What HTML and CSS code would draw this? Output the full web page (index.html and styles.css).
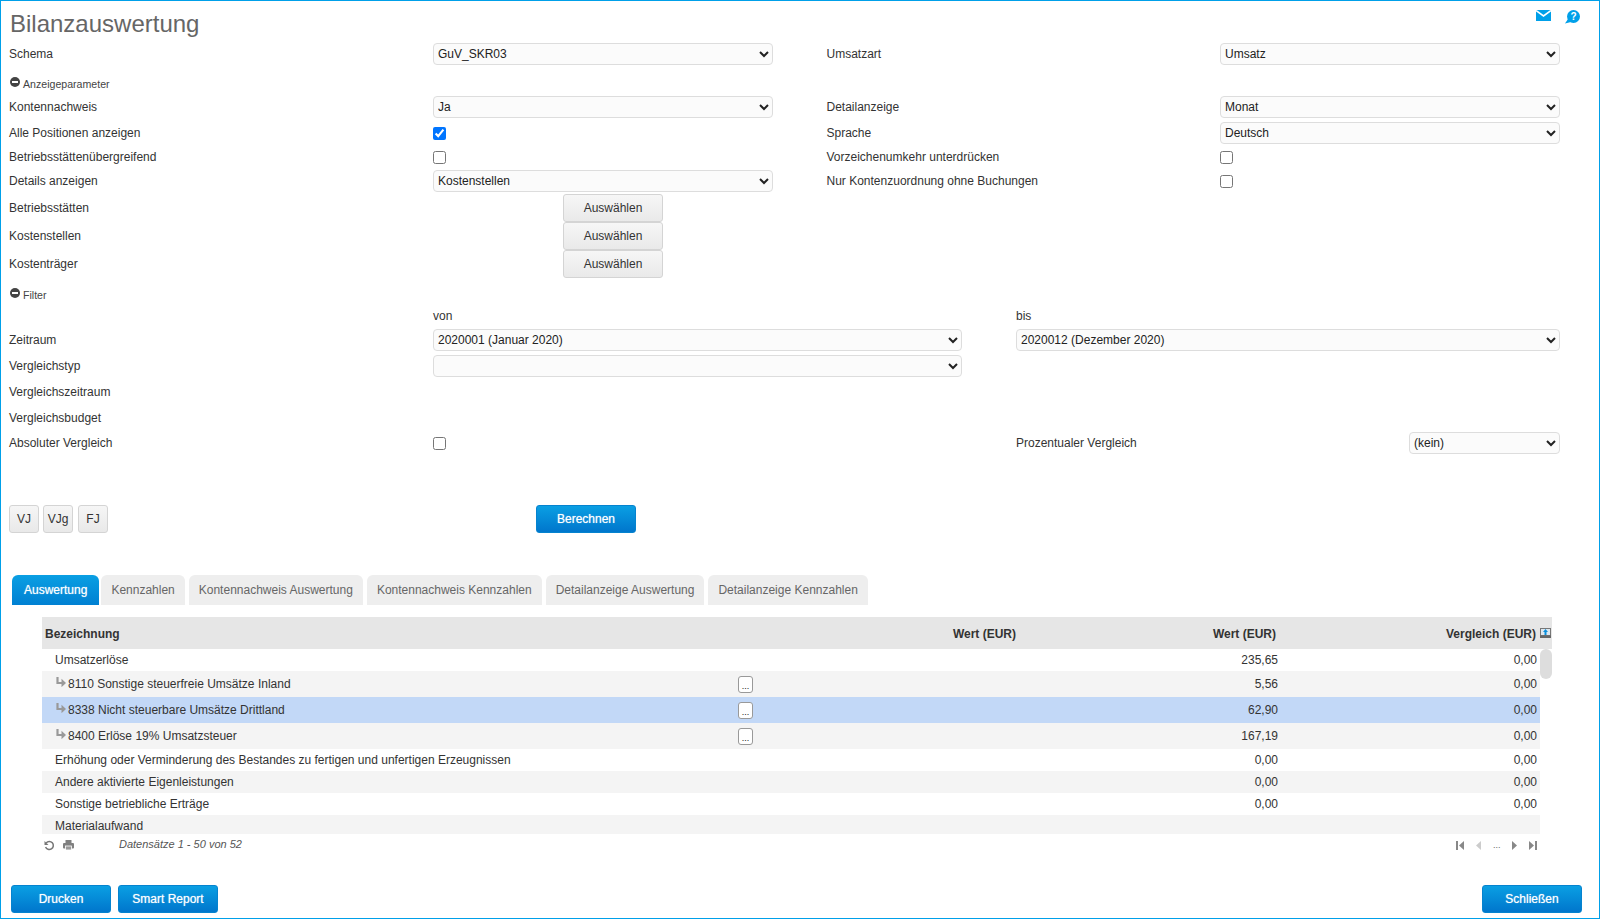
FILE: index.html
```html
<!DOCTYPE html>
<html lang="de">
<head>
<meta charset="UTF-8">
<meta name="viewport" content="width=device-width, initial-scale=1.0">
<title>Bilanzauswertung</title>
<link rel="stylesheet" href="styles.css">
</head>
<body>

<svg class="sprites" width="0" height="0">
  <symbol id="minus" viewBox="0 0 10 10"><circle cx="5" cy="5" r="5" fill="#444"/><rect x="2" y="4" width="6" height="2" fill="#fff"/></symbol>
  <symbol id="sub" viewBox="0 0 10 10"><path d="M1.5 0V6H6" fill="none" stroke="#999" stroke-width="2.2"/><path d="M5.5 1.8L10 6L5.5 10.2Z" fill="#999"/></symbol>
</svg>

<div class="page">

  <div class="title-bar">
    <h1>Bilanzauswertung</h1>
    <div class="top-icons">
      <svg width="15" height="11" viewBox="0 0 15 11"><rect width="15" height="11" fill="#00a0e9"/><path d="M0 0.5L7.5 6L15 0.5" fill="none" stroke="#fff" stroke-width="1.6"/></svg>
      <svg width="15" height="14" viewBox="0 0 15 14"><circle cx="8.5" cy="6.5" r="6.5" fill="#00a0e9"/><path d="M3 9L0 13.5L6 12Z" fill="#00a0e9"/><text x="8.5" y="10" class="help-mark">?</text></svg>
    </div>
  </div>

  <div class="form-row">
    <label>Schema</label>
    <select><option>GuV_SKR03</option></select>
    <label class="second">Umsatzart</label>
    <select><option>Umsatz</option></select>
  </div>

  <div class="section-head section-first"><svg width="10" height="10"><use href="#minus"/></svg>Anzeigeparameter</div>

  <div class="form-row flush">
    <label>Kontennachweis</label>
    <select><option>Ja</option></select>
    <label class="second">Detailanzeige</label>
    <select><option>Monat</option></select>
  </div>
  <div class="form-row">
    <label>Alle Positionen anzeigen</label>
    <div><input type="checkbox" checked></div>
    <label class="second">Sprache</label>
    <select><option>Deutsch</option></select>
  </div>
  <div class="form-row tight">
    <label>Betriebsstättenübergreifend</label>
    <div><input type="checkbox"></div>
    <label class="second">Vorzeichenumkehr unterdrücken</label>
    <div><input type="checkbox"></div>
  </div>
  <div class="form-row tight">
    <label>Details anzeigen</label>
    <select><option>Kostenstellen</option></select>
    <label class="second">Nur Kontenzuordnung ohne Buchungen</label>
    <div><input type="checkbox"></div>
  </div>
  <div class="form-row tight pick">
    <label>Betriebsstätten</label>
    <div><button class="btn btn-pick">Auswählen</button></div>
  </div>
  <div class="form-row flush pick">
    <label>Kostenstellen</label>
    <div><button class="btn btn-pick">Auswählen</button></div>
  </div>
  <div class="form-row flush pick">
    <label>Kostenträger</label>
    <div><button class="btn btn-pick">Auswählen</button></div>
  </div>

  <div class="section-head section-filter"><svg width="10" height="10"><use href="#minus"/></svg>Filter</div>

  <div class="form-row filter-row flush">
    <span></span>
    <label>von</label>
    <span></span>
    <label>bis</label>
  </div>
  <div class="form-row filter-row tight">
    <label>Zeitraum</label>
    <select><option>2020001 (Januar 2020)</option></select>
    <span></span>
    <select class="span2"><option>2020012 (Dezember 2020)</option></select>
  </div>
  <div class="form-row filter-row">
    <label>Vergleichstyp</label>
    <select><option></option></select>
  </div>
  <div class="form-row filter-row">
    <label>Vergleichszeitraum</label>
  </div>
  <div class="form-row filter-row">
    <label>Vergleichsbudget</label>
  </div>
  <div class="form-row filter-row near">
    <label>Absoluter Vergleich</label>
    <div><input type="checkbox"></div>
    <span></span>
    <label>Prozentualer Vergleich</label>
    <select><option>(kein)</option></select>
  </div>

  <div class="actions">
    <button class="btn btn-small">VJ</button>
    <button class="btn btn-small btn-vjg">VJg</button>
    <button class="btn btn-small">FJ</button>
    <button class="btn btn-blue btn-calc">Berechnen</button>
  </div>

  <div class="tabs">
    <div class="tab active">Auswertung</div>
    <div class="tab">Kennzahlen</div>
    <div class="tab">Kontennachweis Auswertung</div>
    <div class="tab">Kontennachweis Kennzahlen</div>
    <div class="tab">Detailanzeige Auswertung</div>
    <div class="tab">Detailanzeige Kennzahlen</div>
  </div>

  <div class="grid">
    <table class="grid-head">
      <colgroup><col class="c-name"><col class="c-btn"><col class="c-wert"><col class="c-val"><col class="c-val"><col class="c-tool"></colgroup>
      <tr>
        <th class="name">Bezeichnung</th>
        <th></th>
        <th>Wert (EUR)</th>
        <th class="wert2">Wert (EUR)</th>
        <th class="cmp">Vergleich (EUR)</th>
        <th class="tool"><svg width="11" height="10" viewBox="0 0 11 10"><rect x="0.5" y="0.5" width="10" height="7" fill="#dde6ee" stroke="#777"/><rect y="7.5" width="11" height="2.5" fill="#666"/><path d="M5.5 1L8 4H6.5V7H4.5V4H3Z" fill="#0a8fdc"/></svg></th>
      </tr>
    </table>
    <div class="grid-scroll">
      <table class="grid-body">
        <colgroup><col class="c-name"><col class="c-btn"><col class="c-wert"><col class="c-val"><col class="c-val"></colgroup>
        <tr>
          <td class="name">Umsatzerlöse</td><td></td><td></td><td class="num wert2">235,65</td><td class="num">0,00</td>
        </tr>
        <tr class="acct odd">
          <td class="name"><svg width="10" height="10"><use href="#sub"/></svg>8110 Sonstige steuerfreie Umsätze Inland</td><td><button class="dots">...</button></td><td></td><td class="num wert2">5,56</td><td class="num">0,00</td>
        </tr>
        <tr class="acct selected">
          <td class="name"><svg width="10" height="10"><use href="#sub"/></svg>8338 Nicht steuerbare Umsätze Drittland</td><td><button class="dots">...</button></td><td></td><td class="num wert2">62,90</td><td class="num">0,00</td>
        </tr>
        <tr class="acct odd">
          <td class="name"><svg width="10" height="10"><use href="#sub"/></svg>8400 Erlöse 19% Umsatzsteuer</td><td><button class="dots">...</button></td><td></td><td class="num wert2">167,19</td><td class="num">0,00</td>
        </tr>
        <tr>
          <td class="name">Erhöhung oder Verminderung des Bestandes zu fertigen und unfertigen Erzeugnissen</td><td></td><td></td><td class="num wert2">0,00</td><td class="num">0,00</td>
        </tr>
        <tr class="odd">
          <td class="name">Andere aktivierte Eigenleistungen</td><td></td><td></td><td class="num wert2">0,00</td><td class="num">0,00</td>
        </tr>
        <tr>
          <td class="name">Sonstige betriebliche Erträge</td><td></td><td></td><td class="num wert2">0,00</td><td class="num">0,00</td>
        </tr>
        <tr class="odd">
          <td class="name">Materialaufwand</td><td></td><td></td><td></td><td></td>
        </tr>
      </table>
      <div class="scroll-thumb"></div>
    </div>
    <div class="grid-foot">
      <svg class="foot-icon" width="11" height="11" viewBox="0 0 11 11"><path d="M2.2 3A4 4 0 1 1 1.6 7" fill="none" stroke="#777" stroke-width="1.5"/><path d="M0.5 1V5H4.5Z" fill="#777"/></svg>
      <svg class="foot-icon" width="11" height="10" viewBox="0 0 11 10"><rect x="2.5" y="0" width="6" height="3" fill="#808080"/><rect x="0" y="3" width="11" height="5.5" rx="1" fill="#808080"/><rect x="2.5" y="6" width="6" height="4" fill="#9a9a9a" stroke="#fff" stroke-width="0.8"/></svg>
      <span class="foot-text">Datensätze 1 - 50 von 52</span>
      <div class="pager">
        <svg width="8" height="9" viewBox="0 0 8 9"><rect width="2" height="9" fill="#888"/><path d="M8 0V9L3 4.5Z" fill="#888"/></svg>
        <svg width="5" height="9" viewBox="0 0 5 9"><path d="M5 0V9L0 4.5Z" fill="#ccc"/></svg>
        <span class="pager-dots">...</span>
        <svg width="5" height="9" viewBox="0 0 5 9"><path d="M0 0V9L5 4.5Z" fill="#888"/></svg>
        <svg width="8" height="9" viewBox="0 0 8 9"><path d="M0 0V9L5 4.5Z" fill="#888"/><rect x="6" width="2" height="9" fill="#888"/></svg>
      </div>
    </div>
  </div>

  <div class="bottom-bar">
    <button class="btn btn-blue">Drucken</button>
    <button class="btn btn-blue">Smart Report</button>
    <button class="btn btn-blue btn-close">Schließen</button>
  </div>

</div>

</body>
</html>
```

FILE: styles.css
```css
html, body {
  margin: 0;
  padding: 0;
}
body {
  font-family: "Liberation Sans", Arial, sans-serif;
  font-size: 12px;
  color: #333;
  background: #fff;
}
.sprites {
  position: absolute;
}
.page {
  box-sizing: border-box;
  height: 919px;
  border: 1px solid #00a0e9;
  overflow: hidden;
}
.title-bar {
  display: flex;
  justify-content: space-between;
  height: 42px;
  padding: 0 19px 0 9px;
}
h1 {
  margin: 0;
  font-size: 24px;
  font-weight: normal;
  line-height: 46px;
  color: #666;
}
.top-icons {
  display: flex;
  gap: 14px;
  padding-top: 9px;
}
.help-mark {
  font-family: "Liberation Sans", Arial, sans-serif;
  font-size: 10px;
  font-weight: bold;
  fill: #fff;
  text-anchor: middle;
}

/* form rows */
.form-row {
  display: grid;
  grid-template-columns: 424px 340px 447px 340px;
  align-items: center;
  height: 22px;
  margin-top: 4px;
  padding-left: 8px;
}
.title-bar + .form-row, .flush {
  margin-top: 0;
}
.tight {
  margin-top: 2px;
}
.near {
  margin-top: 3px;
}
.pick {
  height: 28px;
}
.second {
  padding-left: 53.5px;
}
.filter-row {
  grid-template-columns: 424px 529px 54px 393px 151px;
}
.span2 {
  grid-column: span 2;
}
.form-row > div {
  display: flex;
  align-items: center;
}
select {
  box-sizing: border-box;
  width: 100%;
  height: 22px;
  padding: 0;
  border: 1px solid #ddd;
  border-radius: 4px;
  background-color: #fbfbfb;
  font-family: inherit;
  font-size: 12px;
  color: #222;
}
input[type="checkbox"] {
  width: 13px;
  height: 13px;
  margin: 0;
}
.section-head {
  display: flex;
  align-items: flex-start;
  gap: 3px;
  box-sizing: border-box;
  padding-left: 9px;
  font-size: 10.6px;
  line-height: 14px;
  color: #444;
}
.section-first {
  height: 31px;
  padding-top: 12px;
}
.section-filter {
  height: 27px;
  padding-top: 10px;
}

/* buttons */
.btn {
  box-sizing: border-box;
  height: 28px;
  padding: 0;
  border: 1px solid #d4d4d4;
  border-radius: 3px;
  background: linear-gradient(#f6f6f6, #e9e9e9);
  font-family: inherit;
  font-size: 12px;
  color: #333;
}
.btn-pick {
  width: 100px;
  margin-left: 130px;
}
.btn-small {
  width: 30px;
}
.btn-vjg {
  margin-right: 1px;
}
.btn-blue {
  width: 100px;
  border: 1px solid #0583cf;
  background: linear-gradient(#0a9fe3, #0076cc);
  color: #fff;
  text-shadow: 0 0 1px rgba(255, 255, 255, 0.7);
}
.actions {
  display: flex;
  gap: 4px;
  margin-top: 51px;
  padding-left: 8px;
}
.btn-calc {
  margin-left: 424px;
}

/* tabs */
.tabs {
  display: flex;
  gap: 4px;
  height: 30px;
  margin-top: 42px;
  padding-left: 11px;
}
.tab {
  padding: 0 10px;
  border-radius: 6px 6px 0 0;
  background: #eee;
  line-height: 30px;
  color: #666;
}
.tab.active {
  margin-right: -2px;
  padding: 0 12px;
  background: linear-gradient(#0a9fe3, #0080d2);
  color: #fff;
  text-shadow: 0 0 1px rgba(255, 255, 255, 0.7);
}

/* result table */
.grid {
  margin: 12px 0 0 41px;
  width: 1510px;
}
table {
  border-collapse: collapse;
  table-layout: fixed;
}
.c-name { width: 683px; }
.c-btn { width: 41px; }
.c-wert { width: 252px; }
.c-val { width: 261px; }
.c-tool { width: 12px; }
.grid-head {
  width: 1510px;
  height: 32px;
  background: #e6e6e6;
}
.grid-head th {
  padding: 2px 2px 0 0;
  text-align: right;
  font-size: 12px;
  color: #333;
}
.grid-head th.name {
  padding-left: 3px;
  text-align: left;
}
.grid-head th.wert2 {
  padding-right: 3px;
}
.grid-head th.cmp {
  padding-right: 4px;
}
.grid-head th.tool {
  padding: 0;
}
.tool svg {
  display: block;
}
.grid-scroll {
  position: relative;
  height: 185px;
  overflow: hidden;
}
.grid-body {
  width: 1498px;
}
.grid-body td {
  height: 22px;
  padding: 0;
  white-space: nowrap;
}
.grid-body td.name {
  padding-left: 13px;
}
.grid-body td.num {
  padding-right: 3px;
  text-align: right;
}
.grid-body td.wert2 {
  padding-right: 1px;
}
.grid-body .name svg {
  margin: 0 2px 1px 0;
}
.acct td {
  height: 26px;
}
.grid-body .acct td.name {
  padding-left: 14px;
}
.odd {
  background: #f4f4f4;
}
.selected {
  background: #c2d8f7;
}
.dots {
  display: block;
  box-sizing: border-box;
  width: 15px;
  height: 17px;
  margin: 0 auto;
  padding: 4px 0 0;
  border: 1px solid #999;
  border-radius: 3px;
  background: #fff;
  font-family: inherit;
  font-size: 9px;
  line-height: 9px;
  color: #111;
}
.scroll-thumb {
  position: absolute;
  top: 0;
  right: 0;
  width: 12px;
  height: 30px;
  border-radius: 6px;
  background: #ddd;
}

/* grid footer */
.grid-foot {
  display: flex;
  align-items: center;
  width: 1498px;
  height: 22px;
  padding-left: 2px;
  box-sizing: border-box;
}
.foot-icon + .foot-icon {
  margin-left: 8px;
}
.foot-text {
  margin: -2px 0 0 45px;
  font-size: 11px;
  font-style: italic;
  color: #555;
}
.pager {
  display: flex;
  align-items: center;
  gap: 12px;
  margin-left: auto;
  padding-right: 3px;
}
.pager-dots {
  width: 7px;
  font-size: 9px;
  line-height: 9px;
  color: #666;
}

.bottom-bar {
  display: flex;
  gap: 7px;
  margin-top: 29px;
  padding: 0 17px 0 10px;
}
.btn-close {
  margin-left: auto;
}
```
